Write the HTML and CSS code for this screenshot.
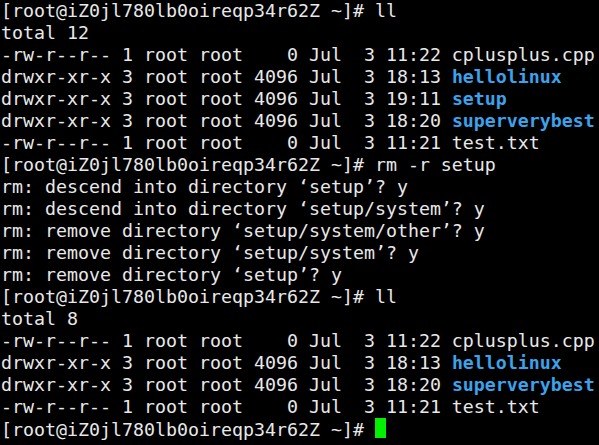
FILE: index.html
```html
<!DOCTYPE html>
<html>
<head>
<meta charset="utf-8">
<link rel="stylesheet" href="styles.css">
</head>
<body>
<div class="term">
<div class="line">[root@iZ0jl780lb0oireqp34r62Z ~]# ll</div>
<div class="line">total 12</div>
<div class="line">-rw-r--r-- 1 root root    0 Jul  3 11:22 cplusplus.cpp</div>
<div class="line">drwxr-xr-x 3 root root 4096 Jul  3 18:13 <span class="dir">hellolinux</span></div>
<div class="line">drwxr-xr-x 3 root root 4096 Jul  3 19:11 <span class="dir">setup</span></div>
<div class="line">drwxr-xr-x 3 root root 4096 Jul  3 18:20 <span class="dir">superverybest</span></div>
<div class="line">-rw-r--r-- 1 root root    0 Jul  3 11:21 test.txt</div>
<div class="line">[root@iZ0jl780lb0oireqp34r62Z ~]# rm -r setup</div>
<div class="line">rm: descend into directory ‘setup’? y</div>
<div class="line">rm: descend into directory ‘setup/system’? y</div>
<div class="line">rm: remove directory ‘setup/system/other’? y</div>
<div class="line">rm: remove directory ‘setup/system’? y</div>
<div class="line">rm: remove directory ‘setup’? y</div>
<div class="line">[root@iZ0jl780lb0oireqp34r62Z ~]# ll</div>
<div class="line">total 8</div>
<div class="line">-rw-r--r-- 1 root root    0 Jul  3 11:22 cplusplus.cpp</div>
<div class="line">drwxr-xr-x 3 root root 4096 Jul  3 18:13 <span class="dir">hellolinux</span></div>
<div class="line">drwxr-xr-x 3 root root 4096 Jul  3 18:20 <span class="dir">superverybest</span></div>
<div class="line">-rw-r--r-- 1 root root    0 Jul  3 11:21 test.txt</div>
<div class="line">[root@iZ0jl780lb0oireqp34r62Z ~]# <span class="cursor"></span></div>
</div>
</body>
</html>
```

FILE: styles.css
```css
html, body {
  margin: 0;
  padding: 0;
  background: #000;
  width: 599px;
  height: 445px;
  overflow: hidden;
}
.term {
  padding: 0 0 0 1px;
  font-family: "DejaVu Sans Mono", monospace;
  font-size: 18.27px;
  color: #e8e8e8;
}
.line {
  height: 22px;
  line-height: 22px;
  white-space: pre;
}
.dir {
  color: #3ca2ea;
  font-weight: bold;
}
.cursor {
  display: inline-block;
  width: 11px;
  height: 20px;
  background: #00f000;
  vertical-align: -2px;
}
```
